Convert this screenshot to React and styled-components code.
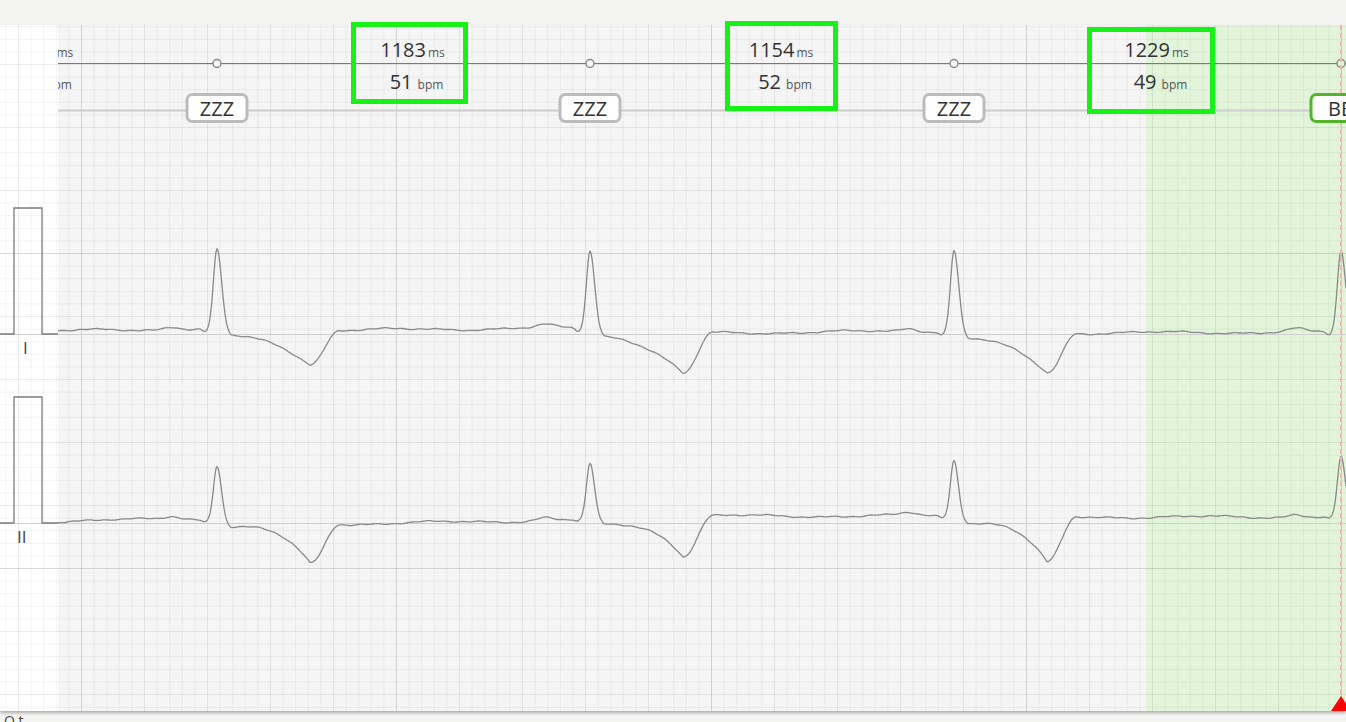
import React from 'react'
import styled, { createGlobalStyle } from 'styled-components'

const W = 1346
const GUTTER = 58
const TOP = 25
const PANEL_H = 686
const SELECT_X = 1146
const BEATS = [217, 590, 954, 1341]

const GlobalStyle = createGlobalStyle`
  html, body {
    margin: 0;
    padding: 0;
    background: #f4f4f2;
  }
  body {
    font-family: "Open Sans", "Noto Sans", sans-serif;
    color: #333;
  }
`

const Page = styled.div`
  position: relative;
  width: ${W}px;
  height: 722px;
  overflow: hidden;
  display: flex;
  flex-direction: column;
`

const TopBar = styled.div`
  flex: none;
  height: ${TOP}px;
  background: #f4f4f2;
`

const Panel = styled.div`
  position: relative;
  z-index: 1;
  flex: none;
  height: ${PANEL_H}px;
  display: flex;
  box-shadow: 0 2px 3px rgba(0, 0, 0, 0.3);
`

const Gutter = styled.div`
  position: relative;
  flex: none;
  width: ${GUTTER}px;
  background: #fff;
  overflow: hidden;
`

const Track = styled.div`
  position: relative;
  flex: 1;
  background: #f5f5f5;
  overflow: hidden;
`

const Layer = styled.svg`
  position: absolute;
  top: 0;
  left: 0;
  display: block;
`

const Selection = styled.div`
  position: absolute;
  top: 0;
  bottom: 0;
  left: ${({ $left }) => $left}px;
  right: 0;
  background: #e2f5da;
`

const LeadLabel = styled.span`
  position: absolute;
  left: ${({ $x }) => $x}px;
  top: ${({ $y }) => $y}px;
  font-size: 17px;
  line-height: 1;
  color: #444;
`

const Tag = styled.div`
  position: absolute;
  top: 68px;
  left: ${({ $x }) => $x}px;
  transform: translateX(-50%);
  box-sizing: border-box;
  min-width: 63px;
  height: 30px;
  padding: 2px 9px 0;
  border: 3px solid ${({ $tone }) => ($tone === 'green' ? '#52b42b' : '#bcbcbc')};
  border-radius: 7px;
  background: #fff;
  font-size: 20px;
  line-height: 22px;
  text-align: center;
  white-space: nowrap;
  color: #333;
`

const ValueLabel = styled.div`
  position: absolute;
  top: 10px;
  left: ${({ $x }) => $x}px;
  transform: translateX(-50%);
  text-align: center;
  white-space: nowrap;
  font-size: 20px;
  line-height: 29px;
  color: #333;
`

const ValueRow = styled.div`
  padding-left: ${({ $indent }) => $indent}px;
`

const Unit = styled.span`
  margin-left: ${({ $gap }) => $gap}px;
  font-size: 12px;
  color: #555;
`

const Highlight = styled.div`
  position: absolute;
  z-index: 3;
  left: ${({ $x }) => $x}px;
  top: ${({ $y }) => $y}px;
  width: ${({ $w }) => $w}px;
  height: ${({ $h }) => $h}px;
  box-sizing: border-box;
  border: 5px solid #17f117;
  pointer-events: none;
`

const BottomBar = styled.div`
  flex: 1;
  padding: 0 4px;
  font-size: 14px;
  line-height: 20px;
  color: #444;
  overflow: hidden;
`

const leads = [
  {
    name: 'I',
    zero: 334,
    calTop: 208,
    phase: 0.4,
    base: [[58, 331], [190, 329], [350, 330], [570, 328], [715, 333], [935, 331], [1080, 333], [1330, 332]],
    shape: { rsL: 3.5, rsR: 4.5, q: 3, p: 3, st: 7, k: 2 },
    beats: [{ r: 79, t: 34 }, { r: 78, t: 42 }, { r: 81, t: 40 }, { r: 81, t: 34 }],
  },
  {
    name: 'II',
    zero: 523,
    calTop: 397,
    phase: 1.9,
    base: [[58, 521], [190, 519], [350, 524], [570, 520], [715, 516], [935, 516], [1080, 517], [1330, 517]],
    shape: { rsL: 3.5, rsR: 4.2, q: 2, p: 3, st: 6, k: 3 },
    beats: [{ r: 55, t: 41 }, { r: 55, t: 39 }, { r: 56, t: 46 }, { r: 59, t: 40 }],
  },
]

const intervals = [
  { x: -17, ms: 1206, bpm: 50 },
  { x: (BEATS[0] + BEATS[1]) / 2 + 9 - GUTTER, ms: 1183, bpm: 51 },
  { x: (BEATS[1] + BEATS[2]) / 2 + 9 - GUTTER, ms: 1154, bpm: 52 },
  { x: (BEATS[2] + BEATS[3]) / 2 + 9 - GUTTER, ms: 1229, bpm: 49 },
]

const tags = [
  { x: BEATS[0], text: 'ZZZ' },
  { x: BEATS[1], text: 'ZZZ' },
  { x: BEATS[2], text: 'ZZZ' },
  { x: BEATS[3], text: 'BB', tone: 'green' },
]

const highlights = [
  { x: 351, y: 22, w: 117, h: 82 },
  { x: 725, y: 21, w: 113, h: 90 },
  { x: 1087, y: 27, w: 128, h: 87 },
]

function baseAt(anchors, x) {
  if (x <= anchors[0][0]) return anchors[0][1]
  for (let i = 1; i < anchors.length; i++) {
    const [x1, y1] = anchors[i]
    const [x0, y0] = anchors[i - 1]
    if (x <= x1) return y0 + ((y1 - y0) * (x - x0)) / (x1 - x0)
  }
  return anchors[anchors.length - 1][1]
}

// one beat, in px above the baseline
function beatShape(dx, s, b) {
  const rs = dx < 0 ? s.rsL : s.rsR
  let v = b.r * Math.exp(-(dx * dx) / (2 * rs * rs))
  v -= s.q * Math.exp(-((dx + 12) ** 2) / 12.5)
  v += s.p * Math.exp(-((dx + 45) ** 2) / 128)
  if (dx > 6 && dx <= 93) {
    const ramp = Math.min(1, (dx - 6) / 8)
    const t = Math.max(0, (dx - 14) / 79)
    v -= ramp * (s.st + (b.t - s.st) * Math.pow(t, s.k))
  } else if (dx > 93 && dx < 123) {
    const u = (dx - 93) / 30
    v -= b.t * (0.5 + 0.5 * Math.cos(Math.PI * u))
  }
  return v
}

// slow wander plus a little jitter, held in short steps like the recorder's samples
function noise(x, ph) {
  const xs = Math.floor(x / 3) * 3
  return (
    0.6 * Math.sin(0.11 * xs + ph) +
    0.35 * Math.sin(0.37 * xs + 2 * ph) +
    1.1 * Math.sin(0.041 * xs + 3 * ph)
  )
}

function tracePath(lead) {
  let d = ''
  for (let x = GUTTER; x <= W; x += 1) {
    let v = 0
    BEATS.forEach((bx, i) => {
      const dx = x - bx
      if (dx > -70 && dx < 130) v += beatShape(dx, lead.shape, lead.beats[i])
    })
    const y = baseAt(lead.base, x) - v + noise(x, lead.phase)
    d += `${x === GUTTER ? 'M' : 'L'}${x} ${y.toFixed(1)}`
  }
  return d
}

function GridPattern({ id }) {
  const step = 12.6
  const groups = { minor: [], major: [], dark: [] }
  for (let i = 0; i < 25; i++) {
    const kind = i === 0 ? 'dark' : i % 5 === 0 ? 'major' : 'minor'
    groups[kind].push(i * step)
  }
  const colors = { minor: 'rgba(0,0,0,0.04)', major: 'rgba(0,0,0,0.08)', dark: 'rgba(0,0,0,0.14)' }
  return (
    <pattern id={id} patternUnits="userSpaceOnUse" x="81" y="253" width="315" height="315">
      {['minor', 'major', 'dark'].map((kind) =>
        groups[kind].map((p) => (
          <g key={kind + p} fill={colors[kind]}>
            <rect x={p} y="0" width="1" height="315" />
            <rect x="0" y={p} width="315" height="1" />
          </g>
        ))
      )}
    </pattern>
  )
}

function GutterDrawing() {
  return (
    <Layer width={GUTTER} height={PANEL_H} viewBox={`0 ${TOP} ${GUTTER} ${PANEL_H}`}>
      <defs>
        <GridPattern id="grid-gutter" />
      </defs>
      <rect x="0" y={TOP} width={GUTTER} height={PANEL_H} fill="url(#grid-gutter)" />
      {leads.map((l) => (
        <g key={l.name}>
          <line x1="0" x2={GUTTER} y1={l.zero + 0.5} y2={l.zero + 0.5} stroke="#cfcfcf" strokeWidth="1" />
          <path
            d={`M0 ${l.zero} H14 V${l.calTop} H42 V${l.zero} H${GUTTER}`}
            fill="none"
            stroke="#7c7c7c"
            strokeWidth="1.3"
          />
        </g>
      ))}
    </Layer>
  )
}

function TrackDrawing() {
  const w = W - GUTTER
  const mx = BEATS[3]
  return (
    <Layer width={w} height={PANEL_H} viewBox={`${GUTTER} ${TOP} ${w} ${PANEL_H}`}>
      <defs>
        <GridPattern id="grid-track" />
      </defs>
      <rect x={GUTTER} y={TOP} width={w} height={PANEL_H} fill="url(#grid-track)" />
      <line x1={GUTTER} x2={W} y1="110.5" y2="110.5" stroke="#cccccc" strokeWidth="2" />
      <line x1={GUTTER} x2={W} y1="63.5" y2="63.5" stroke="#7a7a7a" strokeWidth="1.2" />
      {BEATS.map((bx) => (
        <circle
          key={bx}
          cx={bx}
          cy="63.5"
          r="4"
          fill={bx >= SELECT_X ? '#e2f5da' : '#f5f5f5'}
          stroke="#888"
          strokeWidth="1.4"
        />
      ))}
      {leads.map((l) => (
        <g key={l.name}>
          <line x1={GUTTER} x2={W} y1={l.zero + 0.5} y2={l.zero + 0.5} stroke="#cfcfcf" strokeWidth="1" />
          <path d={tracePath(l)} fill="none" stroke="#8a8a8a" strokeWidth="1.3" strokeLinejoin="round" />
        </g>
      ))}
      <line x1={mx} x2={mx} y1={TOP} y2={TOP + PANEL_H} stroke="#ffb0b0" strokeWidth="2" strokeDasharray="5 3" />
      <polygon points={`${mx - 10},${TOP + PANEL_H} ${mx},${TOP + PANEL_H - 15} ${mx + 10},${TOP + PANEL_H}`} fill="#ff0000" />
    </Layer>
  )
}

export default function App() {
  return (
    <Page>
      <GlobalStyle />
      <TopBar />
      <Panel>
        <Gutter>
          <GutterDrawing />
          <LeadLabel $x={23} $y={314}>I</LeadLabel>
          <LeadLabel $x={17} $y={503}>II</LeadLabel>
        </Gutter>
        <Track>
          <Selection $left={SELECT_X - GUTTER} />
          <TrackDrawing />
          {intervals.map((iv) => (
            <ValueLabel key={iv.ms} $x={iv.x}>
              <ValueRow $indent={0}>
                {iv.ms}
                <Unit $gap={2}>ms</Unit>
              </ValueRow>
              <ValueRow $indent={8}>
                {iv.bpm}
                <Unit $gap={5}>bpm</Unit>
              </ValueRow>
            </ValueLabel>
          ))}
          {tags.map((t) => (
            <Tag key={t.x} $x={t.x - GUTTER} $tone={t.tone}>
              {t.text}
            </Tag>
          ))}
        </Track>
      </Panel>
      <BottomBar>Q t</BottomBar>
      {highlights.map((h) => (
        <Highlight key={h.x} $x={h.x} $y={h.y} $w={h.w} $h={h.h} />
      ))}
    </Page>
  )
}
